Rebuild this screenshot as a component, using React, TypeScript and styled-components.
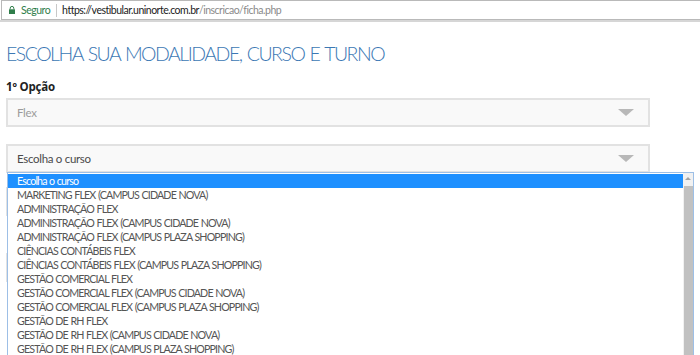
import React from "react";
import styled, { createGlobalStyle } from "styled-components";

const Global = createGlobalStyle`
  html, body { margin: 0; padding: 0; background: #fff; overflow: hidden; }
  body { width: 700px; height: 355px; font-family: Lato, "Open Sans", sans-serif; }
  #root { position: relative; height: 355px; overflow: hidden; }
`;

const Toolbar = styled.div`
  height: 22px;
  box-sizing: border-box;
  padding-left: 1px;
  border-bottom: 2px solid #d6d6d6;
  background: #fff;
`;

const Omnibox = styled.div`
  height: 20px;
  box-sizing: border-box;
  border: 1px solid #b9b9b9;
  border-right: none;
  display: flex;
  align-items: center;
  padding-left: 7px;
  font-family: Lato, "Open Sans", sans-serif;
  font-size: 10.5px;
  letter-spacing: -0.5px;
`;

const Secure = styled.span`
  color: #2f7d4a;
  margin-left: 6px;
`;

const Sep = styled.span`
  width: 1px;
  height: 13px;
  background: #c8c8c8;
  margin: 0 5px 0 6px;
`;

const Host = styled.span`
  color: #222;
`;

const Path = styled.span`
  color: #8a8a8a;
`;

const Content = styled.div`
  padding: 0 6px;
`;

const Title = styled.h1`
  margin: 19px 0 0;
  font-family: Lato, sans-serif;
  font-weight: 300;
  font-size: 19.5px;
  line-height: 26px;
  color: #3c78b4;
  letter-spacing: -1.5px;
  word-spacing: 1.5px;
`;

const Label = styled.div`
  margin-top: 12px;
  font-family: "Open Sans", sans-serif;
  font-weight: 700;
  font-size: 11.5px;
  line-height: 16px;
  letter-spacing: -0.2px;
  color: #222;
`;

const SelectBox = styled.div<{ $top: number }>`
  margin-top: ${(p) => p.$top}px;
  width: 644px;
  height: 29px;
  box-sizing: border-box;
  border: 2px solid #e2e2e2;
  background: #f9f9f9;
  display: flex;
  align-items: center;
  justify-content: space-between;
  padding: 0 14px 0 9px;
`;

const SelectText = styled.span<{ $muted?: boolean }>`
  font-family: Lato, sans-serif;
  font-size: 11.5px;
  letter-spacing: -0.3px;
  color: ${(p) => (p.$muted ? "#9c9c9c" : "#4a4a4a")};
`;

const Caret = styled.span`
  width: 0;
  height: 0;
  border-left: 8px solid transparent;
  border-right: 8px solid transparent;
  border-top: 7px solid #b8b8b8;
`;

const List = styled.div`
  position: absolute;
  left: 7px;
  top: 172px;
  width: 687px;
  height: 220px;
  box-sizing: border-box;
  border: 1px solid #9dbfe6;
  background: #fff;
  display: flex;
`;

const Options = styled.div`
  flex: 1;
  padding-top: 1px;
`;

const Option = styled.div<{ $active?: boolean }>`
  height: 14px;
  line-height: 14px;
  padding-left: 9px;
  font-family: Lato, sans-serif;
  font-size: 10.7px;
  letter-spacing: -0.85px;
  word-spacing: 0.6px;
  white-space: nowrap;
  color: ${(p) => (p.$active ? "#fff" : "#555")};
  background: ${(p) => (p.$active ? "#1e90ff" : "transparent")};
`;

const Scrollbar = styled.div`
  width: 10px;
  background: #f1f1f1;
  display: flex;
  flex-direction: column;
  align-items: center;
`;

const UpArrow = styled.span`
  margin-top: 4px;
  width: 0;
  height: 0;
  border-left: 3px solid transparent;
  border-right: 3px solid transparent;
  border-bottom: 3px solid #a3a3a3;
`;

const Thumb = styled.div`
  margin-top: 6px;
  width: 9px;
  flex: 1;
  background: #c1c1c1;
`;

const Lock = () => (
  <svg width="6" height="8" viewBox="0 0 6 8">
    <path d="M1.2 3.3V2.2a1.8 1.8 0 0 1 3.6 0v1.1" fill="none" stroke="#2f7d4a" strokeWidth="1" />
    <rect x="0" y="3.3" width="6" height="4.7" fill="#2f7d4a" />
  </svg>
);

const courses = [
  "Escolha o curso",
  "MARKETING FLEX (CAMPUS CIDADE NOVA)",
  "ADMINISTRAÇÃO FLEX",
  "ADMINISTRAÇÃO FLEX (CAMPUS CIDADE NOVA)",
  "ADMINISTRAÇÃO FLEX (CAMPUS PLAZA SHOPPING)",
  "CIÊNCIAS CONTÁBEIS FLEX",
  "CIÊNCIAS CONTÁBEIS FLEX (CAMPUS PLAZA SHOPPING)",
  "GESTÃO COMERCIAL FLEX",
  "GESTÃO COMERCIAL FLEX (CAMPUS CIDADE NOVA)",
  "GESTÃO COMERCIAL FLEX (CAMPUS PLAZA SHOPPING)",
  "GESTÃO DE RH FLEX",
  "GESTÃO DE RH FLEX (CAMPUS CIDADE NOVA)",
  "GESTÃO DE RH FLEX (CAMPUS PLAZA SHOPPING)",
];

export default function App() {
  return (
    <>
      <Global />
      <Toolbar>
        <Omnibox>
          <Lock />
          <Secure>Seguro</Secure>
          <Sep />
          <Host>https://vestibular.uninorte.com.br</Host>
          <Path>/inscricao/ficha.php</Path>
        </Omnibox>
      </Toolbar>
      <Content>
        <Title>ESCOLHA SUA MODALIDADE, CURSO E TURNO</Title>
        <Label>1º Opção</Label>
        <SelectBox $top={3}>
          <SelectText $muted>Flex</SelectText>
          <Caret />
        </SelectBox>
        <SelectBox $top={17}>
          <SelectText>Escolha o curso</SelectText>
          <Caret />
        </SelectBox>
        <SelectBox $top={14} aria-hidden />
        <SelectBox $top={37} aria-hidden />
      </Content>
      <List>
        <Options>
          {courses.map((c, i) => (
            <Option key={c} $active={i === 0}>
              {c}
            </Option>
          ))}
        </Options>
        <Scrollbar>
          <UpArrow />
          <Thumb />
        </Scrollbar>
      </List>
    </>
  );
}
